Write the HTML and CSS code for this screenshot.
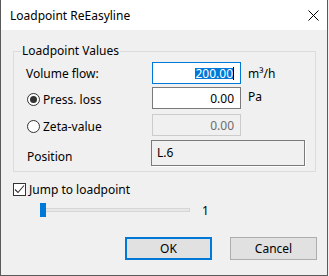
FILE: index.html
```html
<!DOCTYPE html>
<html lang="en">
<head>
    <meta charset="UTF-8">
    <title>Loadpoint ReEasyline</title>
    <link rel="stylesheet" href="styles.css">
</head>
<body>

<div class="window">
    <div class="titlebar">
        <span class="title">Loadpoint ReEasyline</span>
        <svg class="close" width="11" height="11" viewBox="0 0 11 11">
            <path d="M0.5 0.5 L10.5 10.5 M10.5 0.5 L0.5 10.5" stroke="#000" stroke-width="1" fill="none"/>
        </svg>
    </div>

    <div class="client">
        <fieldset class="group">
            <legend>Loadpoint Values</legend>

            <div class="row row-flow">
                <span class="label">Volume flow:</span>
                <div class="field focused"><span class="sel">200.00</span><span class="caret"></span></div>
                <span class="unit">m³/h</span>
            </div>

            <div class="row row-loss">
                <span class="label radio"><span class="dot checked"></span>Press. loss</span>
                <div class="field">0.00</div>
                <span class="unit unit-pa">Pa</span>
            </div>

            <div class="row row-zeta">
                <span class="label radio"><span class="dot"></span>Zeta-value</span>
                <div class="field disabled">0.00</div>
            </div>

            <div class="row row-pos">
                <span class="label pos-label">Position</span>
                <div class="static">L.6</div>
            </div>
        </fieldset>

        <div class="check-row">
            <span class="checkbox">
                <svg width="11" height="11" viewBox="0 0 11 11">
                    <path d="M1 5.5 L4 8.5 L10 1.5" stroke="#333" stroke-width="1.1" fill="none"/>
                </svg>
            </span>
            <span>Jump to loadpoint</span>
        </div>

        <div class="slider-row">
            <div class="track"><span class="thumb"></span></div>
            <span class="slider-value">1</span>
        </div>

        <div class="buttons">
            <button class="btn default">OK</button>
            <button class="btn">Cancel</button>
        </div>
    </div>
</div>

</body>
</html>
```

FILE: styles.css
```css
body {
    margin: 0;
    background: #f0f0f0;
    font-family: "Noto Sans", "Liberation Sans", sans-serif;
    font-size: 12px;
    color: #000;
}
.window {
    width: 328px;
    height: 276px;
    box-sizing: border-box;
    border: 1px solid #5a5a5a;
    border-top: none;
    background: #f0f0f0;
}
.titlebar {
    height: 30px;
    background: #fff;
    display: flex;
    align-items: center;
    justify-content: space-between;
    padding: 0 8px 0 9px;
}
.title {
    font-size: 12px;
    padding-top: 1px;
}
.close {
    display: block;
    margin-top: 1px;
}
.client {
    display: flex;
    flex-direction: column;
}
.group {
    margin: 13px 11px 0 12px;
    padding: 3px 10px 4px 12px;
    border: 1px solid #dcdcdc;
    min-width: 0;
}
.group legend {
    padding: 0 1px;
    margin-left: -5px;
    line-height: 16px;
}
.row {
    display: flex;
    align-items: center;
    height: 22px;
}
.row-loss { margin-top: 3px; }
.row-zeta { margin-top: 5px; }
.row-pos {
    margin-top: 4px;
    height: 27px;
    align-items: flex-start;
}
.label {
    width: 126px;
    flex-shrink: 0;
    display: flex;
    align-items: center;
}
.radio {
    padding-top: 2px;
    padding-left: 1px;
    width: 125px;
}
.dot {
    width: 13px;
    height: 13px;
    box-sizing: border-box;
    border: 1px solid #333;
    border-radius: 50%;
    background: #fff;
    margin-right: 3px;
    display: flex;
    align-items: center;
    justify-content: center;
}
.dot.checked::after {
    content: "";
    width: 7px;
    height: 7px;
    border-radius: 50%;
    background: #333;
}
.field {
    width: 89px;
    height: 22px;
    box-sizing: border-box;
    border: 1px solid #7a7a7a;
    background: #fff;
    display: flex;
    align-items: center;
    justify-content: flex-end;
    padding-right: 6px;
}
.field.focused {
    border-color: #0078d7;
}
.field.disabled {
    border-color: #cccccc;
    background: #f0f0f0;
    color: #6d6d6d;
}
.sel {
    background: #0078d7;
    color: #fff;
    line-height: 11px;
}
.caret {
    width: 1px;
    height: 13px;
    background: #000;
}
.unit {
    margin-left: 7px;
    margin-top: 1px;
}
.unit-pa {
    margin-top: -3px;
}
.pos-label {
    margin-top: 8px;
    padding-left: 1px;
    width: 124px;
}
.static {
    width: 154px;
    height: 26px;
    box-sizing: border-box;
    border: 1px solid #7a7a7a;
    box-shadow: 1px 1px 0 #fff;
    padding: 3px 0 0 5px;
}
.check-row {
    display: flex;
    align-items: center;
    height: 13px;
    margin: 11px 0 0 12px;
    gap: 3px;
}
.checkbox {
    width: 13px;
    height: 13px;
    box-sizing: border-box;
    border: 1px solid #333;
    background: #fff;
    display: flex;
    align-items: center;
    justify-content: center;
}
.checkbox svg {
    display: block;
}
.slider-row {
    display: flex;
    align-items: center;
    height: 14px;
    margin: 7px 0 0 39px;
}
.track {
    position: relative;
    width: 150px;
    height: 4px;
    box-sizing: border-box;
    background: #e7e7e7;
    border: 1px solid #d6d6d6;
}
.thumb {
    position: absolute;
    left: -1px;
    top: -6px;
    width: 6px;
    height: 14px;
    background: #0078d7;
}
.slider-value {
    margin-left: 12px;
}
.buttons {
    display: flex;
    justify-content: flex-end;
    gap: 18px;
    margin-top: 20px;
    padding-right: 10px;
}
.btn {
    width: 87px;
    height: 23px;
    box-sizing: border-box;
    background: #e1e1e1;
    border: 1px solid #adadad;
    font-family: inherit;
    font-size: 12px;
    color: #000;
    padding: 0;
}
.btn.default {
    border: 2px solid #0078d7;
}
```
